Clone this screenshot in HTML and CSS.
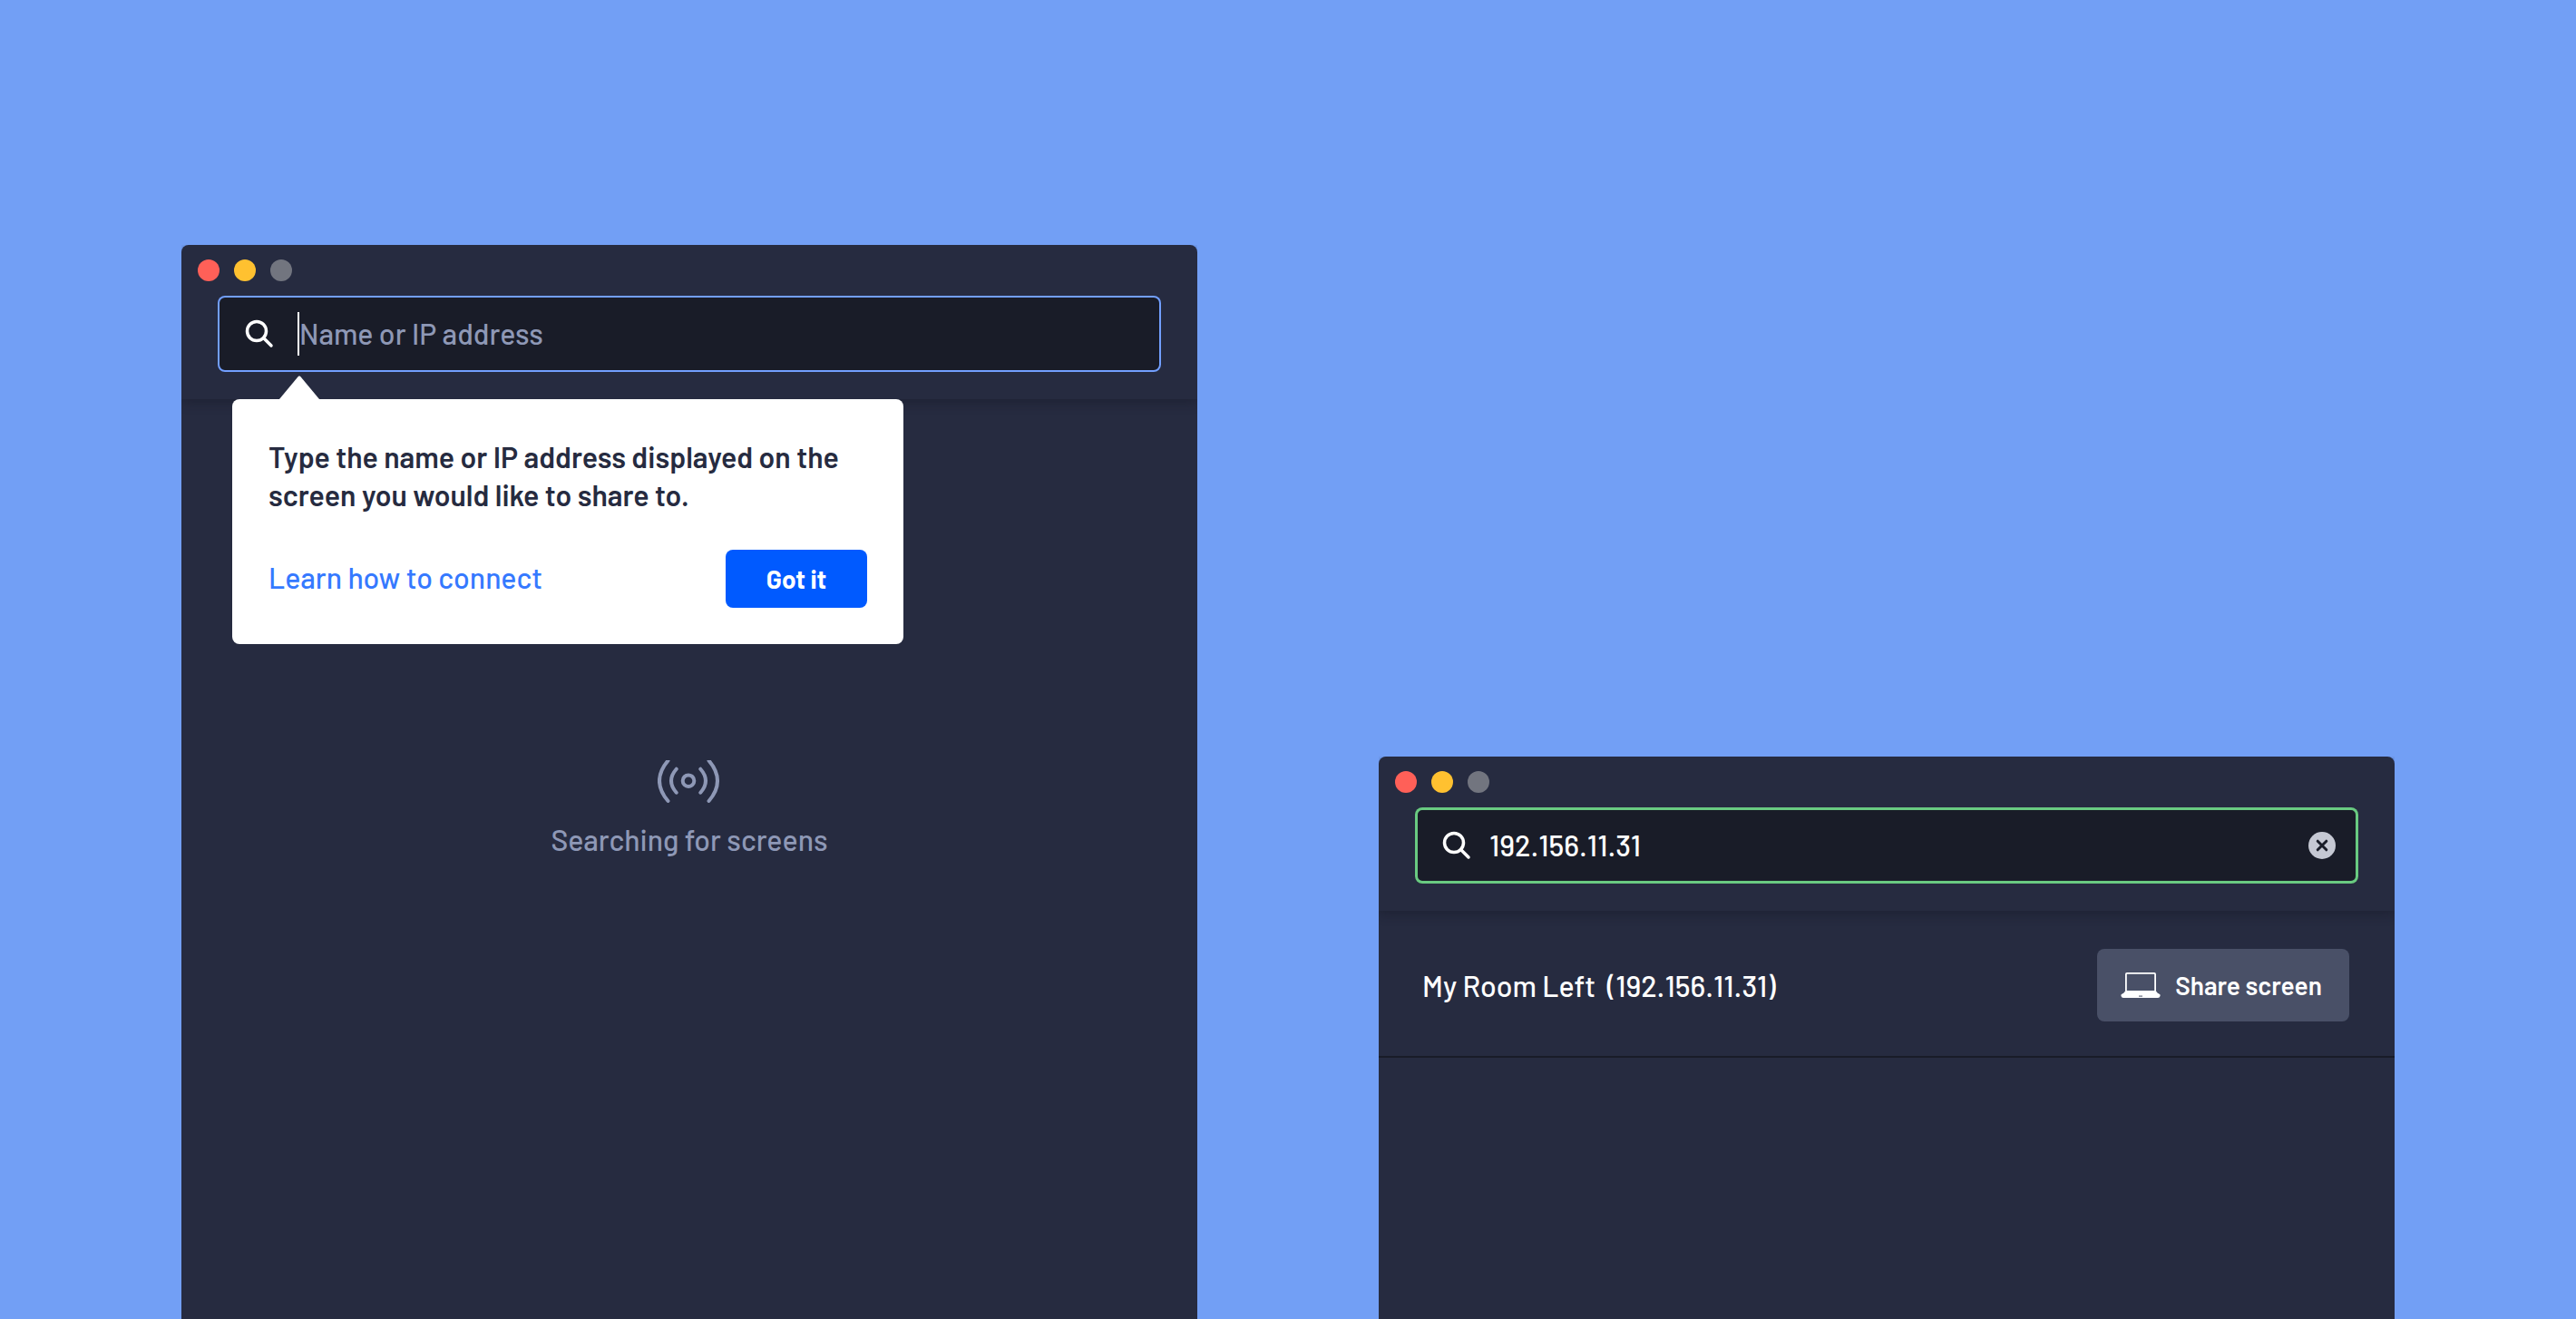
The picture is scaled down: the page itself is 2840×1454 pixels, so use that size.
FILE: index.html
```html
<!DOCTYPE html>
<html lang="en">
<head>
<meta charset="utf-8">
<meta name="viewport" content="width=device-width, initial-scale=1">
<title>Share screen</title>
<link rel="stylesheet" href="styles.css">
</head>
<body>
<main class="desktop">
  <section class="window window-tall" aria-label="Find a screen">
    <header class="window-header">
      <div class="traffic-lights"><span class="light light-close"></span><span class="light light-minimize"></span><span class="light light-zoom"></span></div>
      <div class="search search-focused">
        <label class="search-label" for="search-empty" aria-label="Search"><svg class="search-icon" viewBox="0 0 32 32" width="32" height="32"><circle cx="13" cy="13" r="10.5"/><path d="M20.5 20.5L29 29"/></svg></label>
        <span class="caret"></span>
        <input class="search-input" id="search-empty" type="text" placeholder="Name or IP address">
        <div class="popover" role="dialog" aria-label="Search hint">
          <svg class="popover-arrow" viewBox="0 0 44 26" width="44" height="26"><path d="M0 26L21 .8Q22 0 23 .8L44 26Z"/></svg>
          <p class="popover-text">Type the name or IP address displayed on the screen you would like to share to.</p>
          <div class="popover-actions">
            <a class="link" href="#connect">Learn how to connect</a>
            <button class="button button-primary" type="button">Got it</button>
          </div>
        </div>
      </div>
    </header>
    <div class="searching">
      <svg class="signal-icon" viewBox="0 0 70 48" width="70" height="48"><circle cx="34" cy="22.700" r="6.300"/><path d="M20.700 9.700Q9.300 22.700 20.700 35.700M47.300 9.700Q58.700 22.700 47.300 35.700M11.500 .4Q-7.500 22.700 11.500 45M56.500 .4Q75.500 22.700 56.500 45"/></svg>
      <p class="searching-text">Searching for screens</p>
    </div>
  </section>

  <section class="window window-short" aria-label="Matching screens">
    <header class="window-header">
      <div class="traffic-lights"><span class="light light-close"></span><span class="light light-minimize"></span><span class="light light-zoom"></span></div>
      <div class="search search-valid">
        <label class="search-label" for="search-filled" aria-label="Search"><svg class="search-icon" viewBox="0 0 32 32" width="32" height="32"><circle cx="13" cy="13" r="10.5"/><path d="M20.5 20.5L29 29"/></svg></label>
        <input class="search-input" id="search-filled" type="text" value="192.156.11.31">
        <button class="clear" type="button" aria-label="Clear"><svg class="clear-icon" viewBox="0 0 30 30" width="30" height="30"><circle cx="15" cy="15" r="15"/><path d="M10.200 10.200L19.800 19.800M19.800 10.200L10.200 19.800"/></svg></button>
      </div>
    </header>
    <ul class="results">
      <li class="result">
        <span class="result-name">My Room Left&nbsp; (192.156.11.31)</span>
        <button class="button button-share" type="button">
          <svg class="laptop-icon" viewBox="0 0 44 28" width="44" height="28"><rect class="laptop-screen" x="5.900" y=".9" width="32.200" height="20" rx="1"/><path class="laptop-base" d="M5 20.500H39Q40 22.500 43 24Q44 24.500 43.500 26Q43 28 41 28H3Q1 28 .5 26Q0 24.500 1 24Q4 22.500 5 20.500Z"/><path class="laptop-notch" d="M20 25.300H24V27H20Z"/></svg>
          Share screen
        </button>
      </li>
    </ul>
  </section>
</main>
</body>
</html>
```
FILE: styles.css
```css
* { box-sizing: border-box; }

body {
  margin: 0;
  background: #729ff5;
  color: #fff;
  font-family: Barlow, Roboto, "Liberation Sans", sans-serif;
  font-size: 32px;
  font-weight: 500;
  line-height: 42px;
}

p, ul { margin: 0; padding: 0; }
button, input { font: inherit; color: inherit; }
svg { display: block; fill: none; }

.desktop {
  display: grid;
  grid-template-columns: 1fr 1fr;
  gap: 200px;
  min-height: 100vh;
  padding: 0 200px;
}

.window {
  display: flex;
  flex-direction: column;
  background: #262b40;
  border-radius: 8px 8px 0 0;
}
.window-tall { margin-top: 270px; }
.window-short { margin-top: 834px; }

.window-header {
  padding: 16px 40px 30px;
  border-radius: 8px 8px 0 0;
  box-shadow: 0 4px 12px rgba(20, 23, 34, .4);
  clip-path: inset(0 0 -300px 0);
}

.traffic-lights {
  display: flex;
  gap: 16px;
  margin: 0 -22px 16px;
}
.light { width: 24px; height: 24px; border-radius: 50%; }
.light-close { background: #ff6058; }
.light-minimize { background: #ffc130; }
.light-zoom { background: #72757f; }

.search {
  position: relative;
  display: flex;
  align-items: center;
  height: 84px;
  padding: 0 25px 0 30px;
  background: #191c28;
  border-radius: 8px;
}
.search-focused { box-shadow: inset 0 0 0 2px #729fff; }
.search-valid { box-shadow: inset 0 0 0 3px #69ca81; }

.search-icon {
  stroke: #fff;
  stroke-width: 3.5;
  stroke-linecap: round;
}
.caret { width: 2px; height: 48px; margin-left: 26px; background: #fff; }
.search-input {
  flex: 1;
  min-width: 0;
  height: 48px;
  padding: 0 0 2px;
  border: 0;
  outline: 0;
  background: none;
}
.search-valid .search-input { margin-left: 20px; }
.search-input::placeholder { color: #8e98b6; opacity: 1; }

.clear { padding: 0; border: 0; background: none; }
.clear-icon circle { fill: #c5c8d3; }
.clear-icon path { stroke: #191c28; stroke-width: 3; stroke-linecap: round; }

.popover {
  position: absolute;
  top: 114px;
  left: 16px;
  width: 740px;
  padding: 40px;
  background: #fff;
  border-radius: 8px;
  color: #262b40;
}
.popover-arrow { position: absolute; top: -26px; left: 52px; fill: #fff; }
.popover-text { padding-top: 2px; font-weight: 600; }
.popover-actions {
  display: flex;
  align-items: center;
  justify-content: space-between;
  margin-top: 40px;
}
.link { padding-bottom: 4px; color: #3579ff; text-decoration: none; }

.button {
  border: 0;
  border-radius: 8px;
  font-size: 28px;
  line-height: 32px;
  white-space: nowrap;
}
.button-primary {
  width: 156px;
  height: 64px;
  background: #005aff;
  color: #fff;
  font-weight: 700;
}
.button-share {
  display: flex;
  align-items: center;
  gap: 16px;
  height: 80px;
  padding: 0 30px 0 26px;
  background: #495067;
  font-weight: 600;
}
.laptop-screen { stroke: #fff; stroke-width: 1.8; }
.laptop-base { fill: #fff; }
.laptop-notch { fill: #9297a5; }

.searching {
  display: flex;
  flex-direction: column;
  align-items: center;
  gap: 18px;
  padding-top: 398px;
  color: #8e98b6;
}
.signal-icon { stroke: currentColor; stroke-width: 4; stroke-linecap: round; }

.results { list-style: none; }
.result {
  display: flex;
  align-items: center;
  justify-content: space-between;
  padding: 42px 50px 38px 48px;
  border-bottom: 2px solid #191c28;
}
```
